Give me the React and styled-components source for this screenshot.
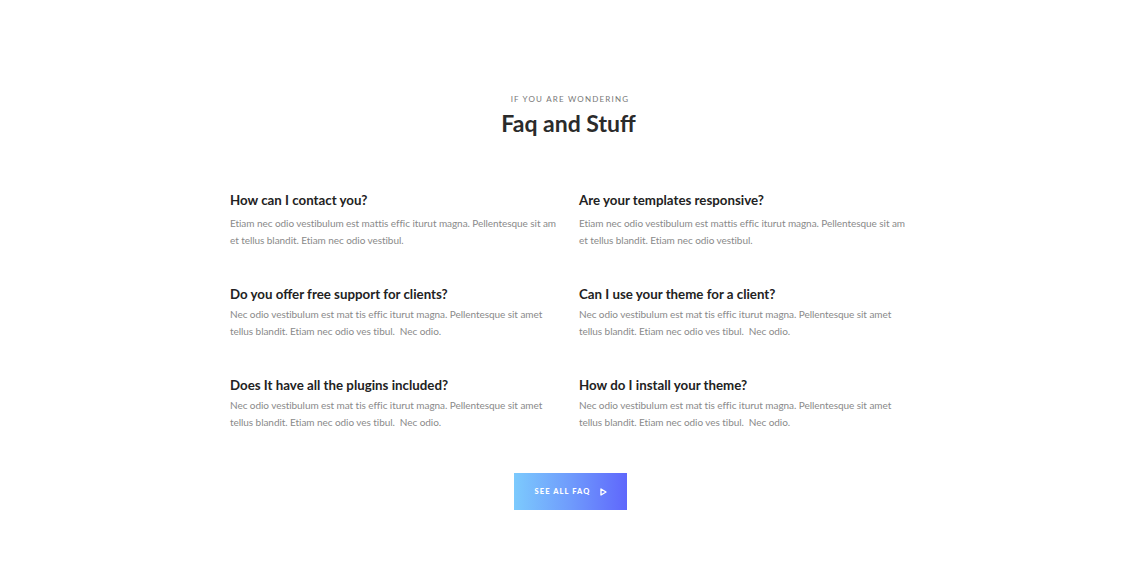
import React from 'react'
import styled, { createGlobalStyle } from 'styled-components'

const faqs = [
  {
    q: 'How can I contact you?',
    a: 'Etiam nec odio vestibulum est mattis effic iturut magna. Pellentesque sit am et tellus blandit. Etiam nec odio vestibul.',
    wide: true,
  },
  {
    q: 'Are your templates responsive?',
    a: 'Etiam nec odio vestibulum est mattis effic iturut magna. Pellentesque sit am et tellus blandit. Etiam nec odio vestibul.',
    wide: true,
  },
  {
    q: 'Do you offer free support for clients?',
    a: 'Nec odio vestibulum est mat tis effic iturut magna. Pellentesque sit amet tellus blandit. Etiam nec odio ves tibul.  Nec odio.',
  },
  {
    q: 'Can I use your theme for a client?',
    a: 'Nec odio vestibulum est mat tis effic iturut magna. Pellentesque sit amet tellus blandit. Etiam nec odio ves tibul.  Nec odio.',
  },
  {
    q: 'Does It have all the plugins included?',
    a: 'Nec odio vestibulum est mat tis effic iturut magna. Pellentesque sit amet tellus blandit. Etiam nec odio ves tibul.  Nec odio.',
  },
  {
    q: 'How do I install your theme?',
    a: 'Nec odio vestibulum est mat tis effic iturut magna. Pellentesque sit amet tellus blandit. Etiam nec odio ves tibul.  Nec odio.',
  },
]

const App = () => (
  <>
    <GlobalStyle />
    <Section>
      <Eyebrow>If you are wondering</Eyebrow>
      <Title>Faq and Stuff</Title>
      <Grid>
        {faqs.map((item, i) => (
          <Item key={i}>
            <Question>{item.q}</Question>
            <Answer $wide={item.wide}>{item.a}</Answer>
          </Item>
        ))}
      </Grid>
      <SeeAll>
        See all faq
        <svg width="7" height="8" viewBox="0 0 7 8" fill="none">
          <path d="M1 1 L6 4 L1 7 Z" stroke="#fff" strokeWidth="1.4" strokeLinejoin="round" />
        </svg>
      </SeeAll>
    </Section>
  </>
)

export default App

const GlobalStyle = createGlobalStyle`
  body {
    margin: 0;
    background: #fff;
    font-family: 'Lato', 'Open Sans', sans-serif;
  }
`

const Section = styled.section`
  display: flex;
  flex-direction: column;
  align-items: center;
  padding-top: 94px;
  height: 568px;
  box-sizing: border-box;
`

const Eyebrow = styled.div`
  font-family: 'Lato', sans-serif;
  font-size: 8px;
  letter-spacing: 1.2px;
  text-transform: uppercase;
  color: #777;
  line-height: 10px;
  margin-left: 3px;
`

const Title = styled.h2`
  margin: 4px 0 0;
  font-family: 'Lato', sans-serif;
  font-size: 23px;
  font-weight: 700;
  color: #2b2b2b;
  line-height: 30px;
`

const Grid = styled.div`
  display: grid;
  grid-template-columns: 328px 328px;
  column-gap: 21px;
  row-gap: 36px;
  margin-top: 53px;
`

const Item = styled.div`
  display: flex;
  flex-direction: column;
`

const Question = styled.h3`
  margin: 0;
  font-family: 'Lato', sans-serif;
  font-size: 13.3px;
  font-weight: 700;
  color: #222;
  line-height: 18px;
`

const Answer = styled.p`
  margin: ${(p) => (p.$wide ? '6px' : '3px')} 0 0;
  font-family: 'Lato', sans-serif;
  font-size: 10px;
  font-weight: 400;
  letter-spacing: -0.06px;
  color: #8a8a8a;
  line-height: 17px;
  white-space: pre-wrap;
`

const SeeAll = styled.button`
  margin: 42px 0 0 4px;
  width: 113px;
  height: 37px;
  border: none;
  background: linear-gradient(90deg, #7ccafd 0%, #6f9bfc 50%, #5f67fc 100%);
  color: #fff;
  font-family: 'Lato', sans-serif;
  font-size: 7.5px;
  font-weight: 900;
  letter-spacing: 1.1px;
  text-transform: uppercase;
  display: flex;
  align-items: center;
  justify-content: center;
  gap: 9px;
  padding: 0;
  cursor: pointer;
`
